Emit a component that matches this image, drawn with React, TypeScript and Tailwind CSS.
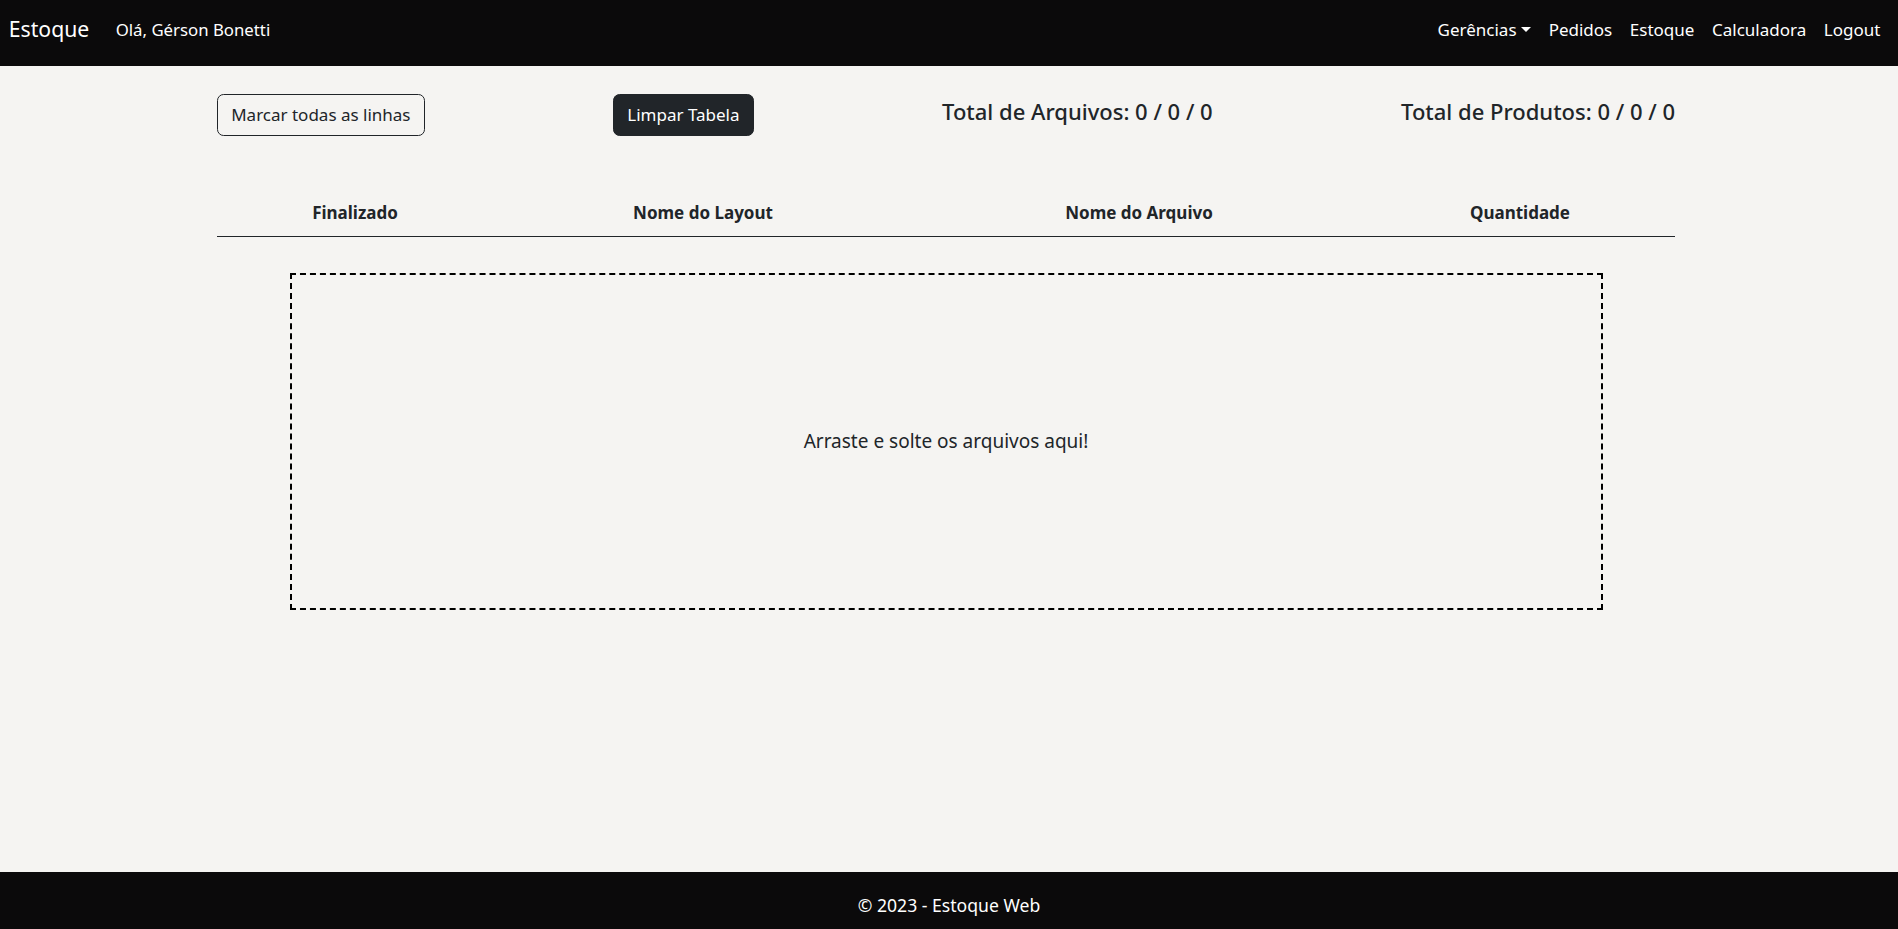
import React from 'react';

const navLinks = ['Pedidos', 'Estoque', 'Calculadora', 'Logout'];

const columns = [
  { label: 'Finalizado', width: 'w-[276px]' },
  { label: 'Nome do Layout', width: 'w-[420px]' },
  { label: 'Nome do Arquivo', width: 'w-[452px]' },
  { label: 'Quantidade', width: 'w-[310px]' },
];

const Navbar: React.FC = () => (
  <nav className="h-[66px] bg-[#0b0a0b] flex items-center justify-between px-[8.8px] pb-[6px] text-white">
    <div className="flex items-center">
      <a className="text-[21.2px] leading-[33px] mr-[17.6px] pb-[4px]">Estoque</a>
      <span className="px-[8.8px] text-[16.8px] leading-[26.4px]">Olá, Gérson Bonetti</span>
    </div>
    <ul className="flex items-center text-[17px] leading-[26.4px]">
      <li className="px-[8.8px] flex items-center">
        Gerências
        <span className="ml-[4.5px] mb-[2px] w-0 h-0 border-l-[5.3px] border-r-[5.3px] border-t-[5.3px] border-l-transparent border-r-transparent border-t-white" />
      </li>
      {navLinks.map((l) => (
        <li key={l} className="px-[8.8px]">
          {l}
        </li>
      ))}
    </ul>
  </nav>
);

export default function App() {
  return (
    <div className="min-h-screen flex flex-col bg-[#f5f4f2] text-[#212529] font-['Segoe_UI','Noto_Sans',sans-serif]">
      <Navbar />

      <main className="flex-1">
        <div className="w-[1458px] ml-[217px]">
          {/* toolbar */}
          <div className="mt-[28px] flex items-start justify-between">
            <button
              type="button"
              className="px-[13.2px] py-[6.6px] text-[17px] leading-[26.4px] border border-[#212529] rounded-[6.6px] bg-transparent"
            >
              Marcar todas as linhas
            </button>
            <button
              type="button"
              className="px-[13.2px] py-[6.6px] text-[17px] leading-[26.4px] border border-[#212529] rounded-[6.6px] bg-[#212529] text-white"
            >
              Limpar Tabela
            </button>
            <h5 className="mt-[4px] text-[22px] leading-[26.4px] font-medium">Total de Arquivos: 0 / 0 / 0</h5>
            <h5 className="mt-[4px] text-[22px] leading-[26.4px] font-medium">Total de Produtos: 0 / 0 / 0</h5>
          </div>

          {/* table header */}
          <table className="mt-[56px] w-full border-collapse">
            <thead>
              <tr className="border-b border-[#212529]">
                {columns.map((c) => (
                  <th
                    key={c.label}
                    className={`${c.width} py-[8.8px] px-[8.8px] text-center text-[17px] leading-[26.4px] font-bold`}
                  >
                    {c.label}
                  </th>
                ))}
              </tr>
            </thead>
          </table>

          {/* drop zone */}
          <div className="mt-[36px] mx-auto w-[1313px] h-[337px] border-2 border-dashed border-black flex items-center justify-center">
            <span className="text-[19px] leading-[28px]">Arraste e solte os arquivos aqui!</span>
          </div>
        </div>
      </main>

      <footer className="h-[57px] bg-[#0b0a0b] text-white flex items-center justify-center pt-[9px]">
        <span className="text-[17.6px] leading-[26.4px]">© 2023 - Estoque Web</span>
      </footer>
    </div>
  );
}
